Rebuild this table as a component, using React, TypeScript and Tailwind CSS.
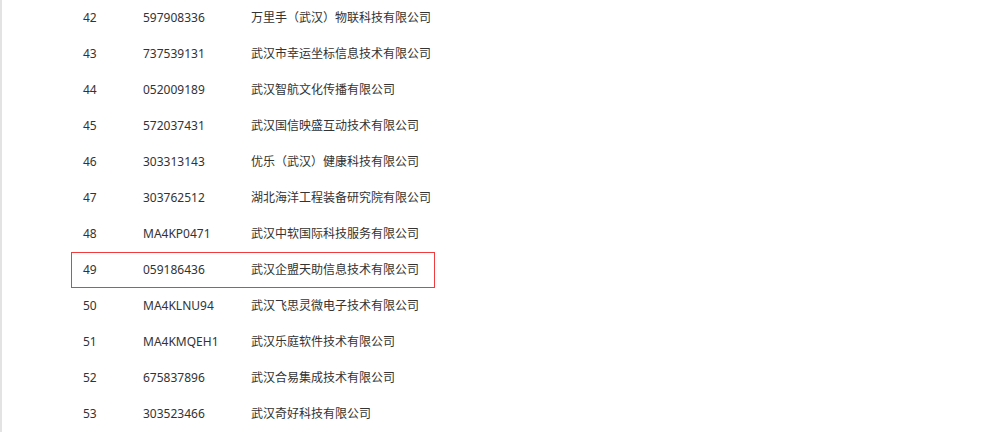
const ROWS: [string, string, string][] = [
  ['42', '597908336', '万里手（武汉）物联科技有限公司'],
  ['43', '737539131', '武汉市幸运坐标信息技术有限公司'],
  ['44', '052009189', '武汉智航文化传播有限公司'],
  ['45', '572037431', '武汉国信映盛互动技术有限公司'],
  ['46', '303313143', '优乐（武汉）健康科技有限公司'],
  ['47', '303762512', '湖北海洋工程装备研究院有限公司'],
  ['48', 'MA4KP0471', '武汉中软国际科技服务有限公司'],
  ['49', '059186436', '武汉企盟天助信息技术有限公司'],
  ['50', 'MA4KLNU94', '武汉飞思灵微电子技术有限公司'],
  ['51', 'MA4KMQEH1', '武汉乐庭软件技术有限公司'],
  ['52', '675837896', '武汉合易集成技术有限公司'],
  ['53', '303523466', '武汉奇好科技有限公司'],
];

export default function App() {
  return (
    <div
      className="h-[432px] w-[997px] overflow-hidden border-l-2 border-[#e3e3e3] bg-white text-[12px] text-[#333]"
      style={{ fontFamily: '"Noto Sans", "Noto Sans CJK SC", sans-serif' }}
    >
      <div className="ml-[69px] w-[364px]">
        {ROWS.map(([no, code, name]) => (
          <div
            key={no}
            className={`flex h-[36px] items-center border ${
              no === '49' ? 'border-[#f03c3c]' : 'border-transparent'
            }`}
          >
            <span className="w-[71px] pl-[11px]">{no}</span>
            <span className="w-[108px]">{code}</span>
            <span className="flex-1">{name}</span>
          </div>
        ))}
      </div>
    </div>
  );
}
